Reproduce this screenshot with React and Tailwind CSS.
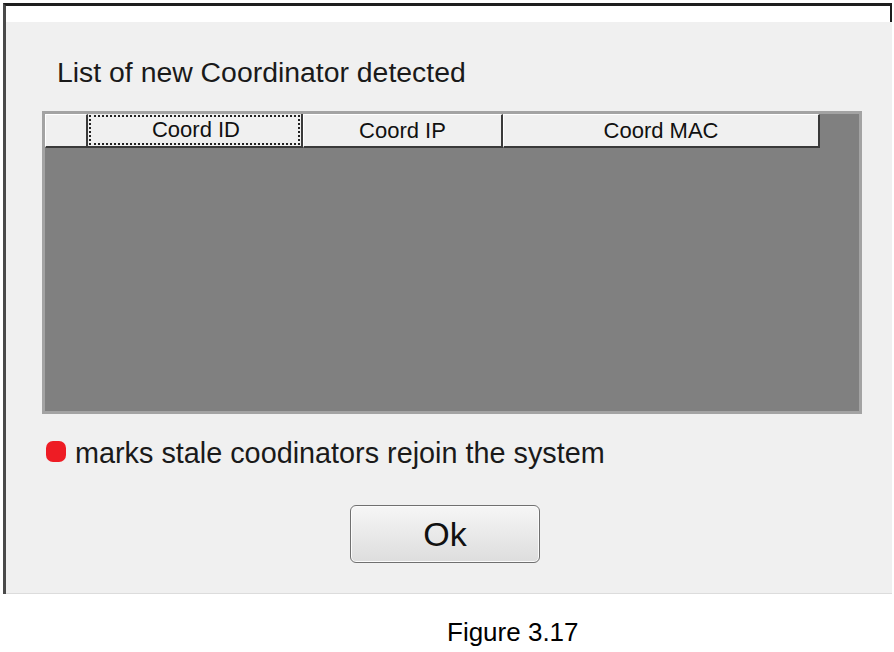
export default function App() {
  const sans = { fontFamily: '"Liberation Sans", Arial, sans-serif' };
  return (
    <div className="w-[894px] h-[652px] bg-white overflow-hidden" style={sans}>
      <div className="ml-[3px] mt-[3px] w-[889px] h-[591px] border-t-[3px] border-l-[3px] border-t-[#1e1e1e] border-l-[#4a4a4a] flex flex-col">
        <div className="h-[16px] bg-white border-r-[2px] border-[#1e1e1e] shrink-0"></div>
        <div className="flex-1 bg-[#f0f0f0] border-b border-[#dcdcdc] flex flex-col pl-[36px] pt-[34px]">
          <div className="text-[28.4px] leading-[32px] text-[#1a1a1a] pl-[15px]">List of new Coordinator detected</div>
          <div className="mt-[23px] w-[820px] h-[303px] border-[3px] border-[#a3a3a3] bg-[#808080] flex flex-col">
            <div className="flex h-[34px] text-[22px] leading-[30px] text-[#111]">
              <div className="w-[43px] bg-[#f0f0f0] border-t border-l border-white border-r-2 border-b-2 border-r-[#3a3a3a] border-b-[#3a3a3a]"></div>
              <div className="w-[215px] bg-[#f0f0f0] border-r-2 border-b-2 border-r-[#3a3a3a] border-b-[#3a3a3a] p-[1px]">
                <div className="h-full border-2 border-dotted border-[#222] flex items-center justify-center pl-[3px]">Coord ID</div>
              </div>
              <div className="w-[200px] bg-[#f0f0f0] border-t border-l border-white border-r-2 border-b-2 border-r-[#3a3a3a] border-b-[#3a3a3a] flex items-center justify-center">Coord IP</div>
              <div className="w-[317px] bg-[#f0f0f0] border-t border-l border-white border-r-2 border-b-2 border-r-[#3a3a3a] border-b-[#3a3a3a] flex items-center justify-center">Coord MAC</div>
            </div>
          </div>
          <div className="mt-[23px] flex items-start pl-[4px]">
            <div className="mt-[4px] w-[20px] h-[21px] rounded-[7px] bg-[#ee1c24] shrink-0"></div>
            <div className="ml-[9px] text-[28.8px] leading-[32px] text-[#1a1a1a]">marks stale coodinators rejoin the system</div>
          </div>
          <div className="mt-[36px] ml-[308px] w-[190px] h-[58px] rounded-[6px] border border-[#707070] bg-gradient-to-b from-[#f6f6f6] to-[#dddddd] flex items-center justify-center text-[34px] text-[#111] shadow-[inset_0_0_0_1px_#fbfbfb]">
            Ok
          </div>
        </div>
      </div>
      <div className="mt-[23px] pl-[447px] text-[26px] leading-[30px] text-black">Figure 3.17</div>
    </div>
  );
}
